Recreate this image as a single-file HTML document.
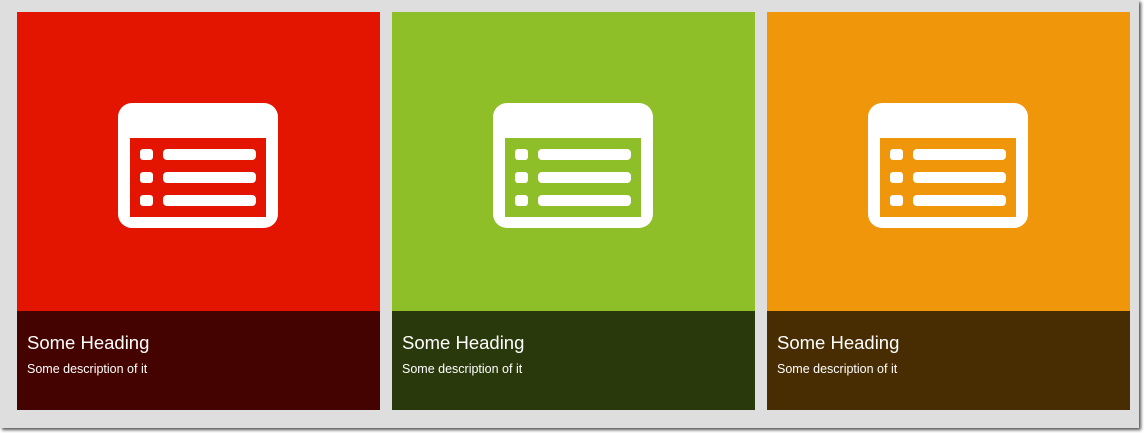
<!DOCTYPE html>
<html><head><style>
*{margin:0;padding:0;box-sizing:border-box}
body{width:1144px;height:433px;background:#fff;position:relative;overflow:hidden;font-family:"Segoe UI","Liberation Sans",sans-serif}
.frame{position:absolute;left:0;top:0;width:1139px;height:428px;background:#dedede;box-shadow:2px 2px 3px #555}
.card{position:absolute;top:12px;width:363px;height:398px}
.top{height:299px;position:relative}
.bot{height:99px;padding:21px 10px;color:#fff}
.bot h2{font-weight:normal;font-size:18.5px;line-height:22px;margin-bottom:8px}
.bot p{font-size:12.5px}
svg{position:absolute;left:101px;top:91px}
</style></head><body>
<div class="frame"></div>
<div class="card" style="left:17px"><div class="top" style="background:#e41500">
<svg width="160" height="125" viewBox="0 0 160 125"><rect x="0" y="0" width="160" height="125" rx="14" fill="#fff"/><rect x="12" y="35" width="136" height="79" fill="#e41500"/><g fill="#fff"><rect x="22" y="46" width="13" height="11" rx="3"/><rect x="22" y="69" width="13" height="11" rx="3"/><rect x="22" y="92" width="13" height="11" rx="3"/><rect x="45" y="46" width="93" height="11" rx="4"/><rect x="45" y="69" width="93" height="11" rx="4"/><rect x="45" y="92" width="93" height="11" rx="4"/></g></svg>
</div><div class="bot" style="background:#450300"><h2>Some Heading</h2><p>Some description of it</p></div></div>
<div class="card" style="left:392px"><div class="top" style="background:#8ebf28">
<svg width="160" height="125" viewBox="0 0 160 125"><rect x="0" y="0" width="160" height="125" rx="14" fill="#fff"/><rect x="12" y="35" width="136" height="79" fill="#8ebf28"/><g fill="#fff"><rect x="22" y="46" width="13" height="11" rx="3"/><rect x="22" y="69" width="13" height="11" rx="3"/><rect x="22" y="92" width="13" height="11" rx="3"/><rect x="45" y="46" width="93" height="11" rx="4"/><rect x="45" y="69" width="93" height="11" rx="4"/><rect x="45" y="92" width="93" height="11" rx="4"/></g></svg>
</div><div class="bot" style="background:#29390c"><h2>Some Heading</h2><p>Some description of it</p></div></div>
<div class="card" style="left:767px"><div class="top" style="background:#f0960a">
<svg width="160" height="125" viewBox="0 0 160 125"><rect x="0" y="0" width="160" height="125" rx="14" fill="#fff"/><rect x="12" y="35" width="136" height="79" fill="#f0960a"/><g fill="#fff"><rect x="22" y="46" width="13" height="11" rx="3"/><rect x="22" y="69" width="13" height="11" rx="3"/><rect x="22" y="92" width="13" height="11" rx="3"/><rect x="45" y="46" width="93" height="11" rx="4"/><rect x="45" y="69" width="93" height="11" rx="4"/><rect x="45" y="92" width="93" height="11" rx="4"/></g></svg>
</div><div class="bot" style="background:#482d02"><h2>Some Heading</h2><p>Some description of it</p></div></div>
</body></html>
